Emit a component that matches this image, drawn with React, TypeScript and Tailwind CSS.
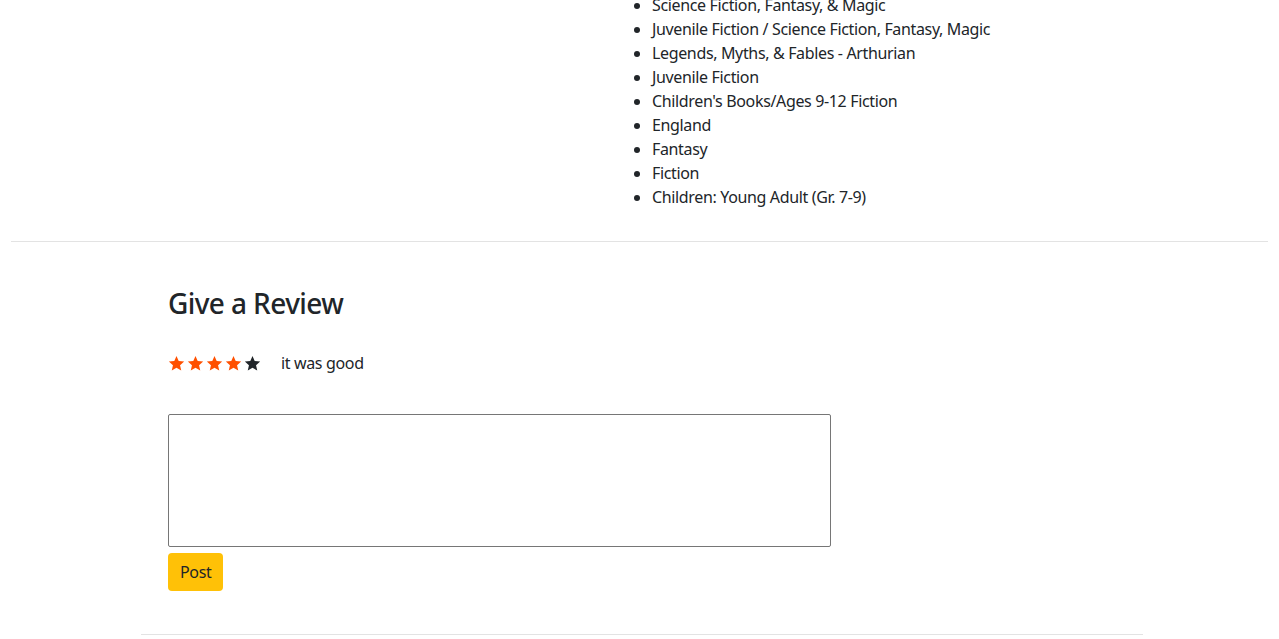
import { useState } from "react";

const subjects = [
  "Science Fiction, Fantasy, & Magic",
  "Juvenile Fiction / Science Fiction, Fantasy, Magic",
  "Legends, Myths, & Fables - Arthurian",
  "Juvenile Fiction",
  "Children's Books/Ages 9-12 Fiction",
  "England",
  "Fantasy",
  "Fiction",
  "Children: Young Adult (Gr. 7-9)",
];

function Star({ filled }: { filled: boolean }) {
  return (
    <svg
      viewBox="0 0 24 24"
      className={"w-[17px] h-[17px] " + (filled ? "fill-[#ff5000]" : "fill-[#212529]")}
    >
      <path d="M12 1.5l3.1 7.1 7.7.7-5.8 5.1 1.7 7.6L12 18l-6.7 4 1.7-7.6L1.2 9.3l7.7-.7z" />
    </svg>
  );
}

function App() {
  const [rating] = useState(4);
  const [text, setText] = useState("");

  return (
    <div className="bg-white h-screen overflow-hidden text-[#212529] font-['Noto_Sans','Open_Sans',sans-serif]">
      <div className="flex">
        <div className="w-[620px] shrink-0" />
        <ul className="list-disc pl-8 -mt-[7px] text-base leading-6 tracking-[-0.35px]">
          {subjects.map((s) => (
            <li key={s}>{s}</li>
          ))}
        </ul>
      </div>

      <hr className="mt-8 mx-[11px] border-t border-[#e3e3e3]" />

      <div className="pl-[168px] pt-[44px]">
        <h3 className="text-[28px] leading-[34px] font-medium tracking-[-0.6px]">Give a Review</h3>

        <div className="flex items-center mt-[31px]">
          <div className="flex gap-[2px]">
            {[1, 2, 3, 4, 5].map((n) => (
              <Star key={n} filled={n <= rating} />
            ))}
          </div>
          <span className="ml-[20px] text-base leading-6 tracking-[-0.35px]">it was good</span>
        </div>

        <textarea
          value={text}
          onChange={(e) => setText(e.target.value)}
          className="block mt-[39px] w-[663px] h-[133px] border border-[#767676] rounded-[2px] resize-none outline-none"
        />
        <button className="mt-[6px] bg-[#ffc107] rounded-[4px] px-3 h-[38px] text-base tracking-[-0.35px]">
          Post
        </button>
      </div>

      <hr className="mt-[43px] ml-[141px] w-[1002px] border-t border-[#e3e3e3]" />
    </div>
  );
}

export default App;
